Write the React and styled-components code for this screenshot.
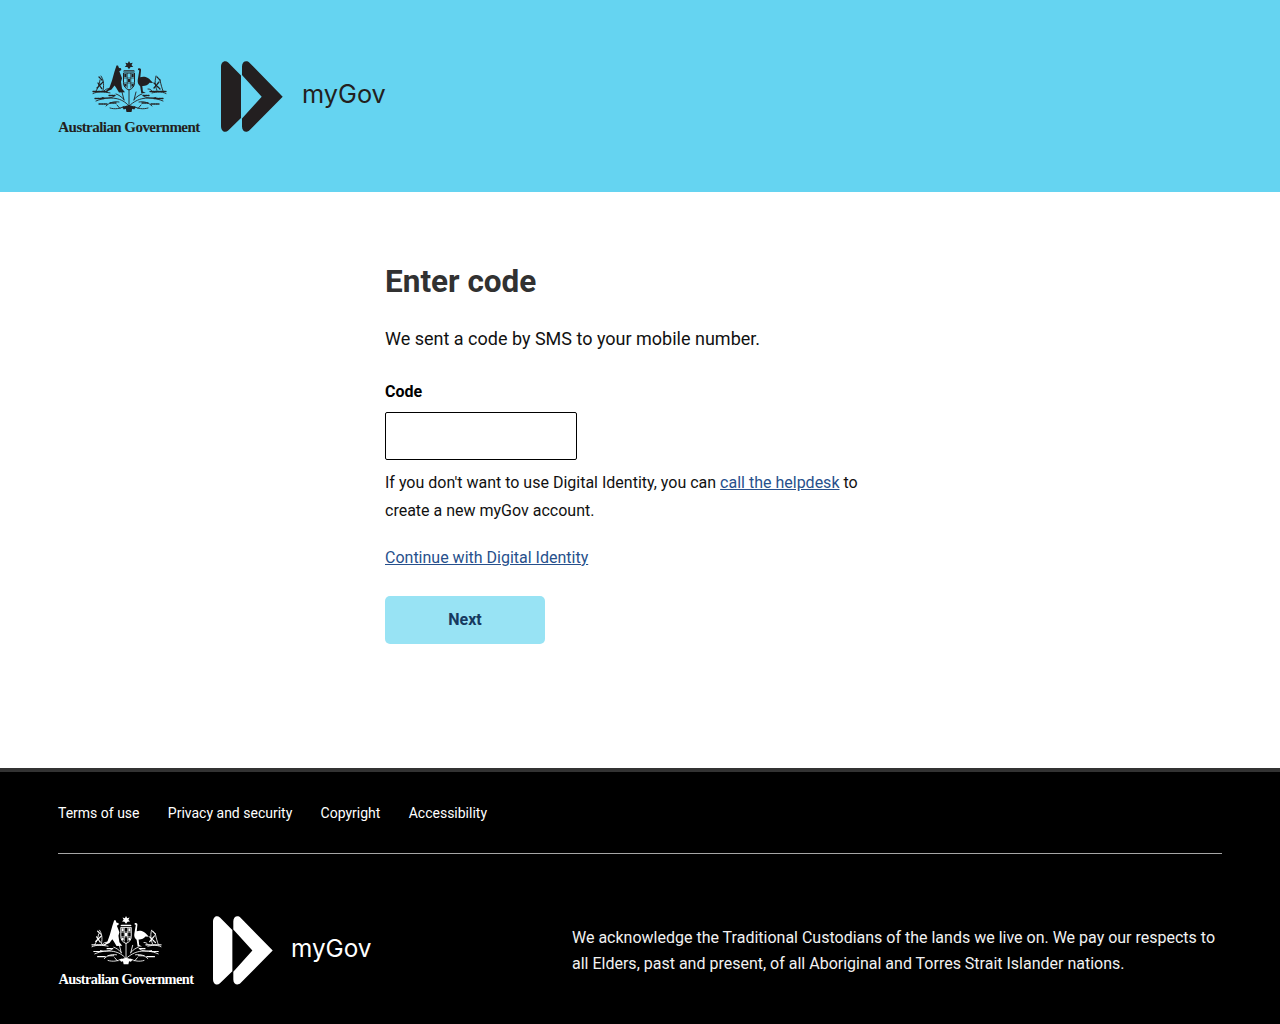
import React from 'react';
import styled, { createGlobalStyle } from 'styled-components';

const GlobalStyle = createGlobalStyle`
  html, body {
    margin: 0;
    padding: 0;
    background: #fff;
    font-family: Roboto, "Liberation Sans", sans-serif;
  }
`;

const Page = styled.div`
  display: flex;
  flex-direction: column;
  min-height: 1024px;
`;

const Header = styled.header`
  height: 192px;
  box-sizing: border-box;
  padding: 61px 58px 0;
  background: #65d4f1;
  color: #231f20;
`;

const Lockup = styled.div`
  display: flex;
  align-items: flex-start;
`;

const GovBlock = styled.div`
  display: flex;
  flex-direction: column;
  align-items: center;
  width: ${(p) => p.$width}px;
`;

const GovName = styled.span`
  margin-top: 7px;
  font-family: "Liberation Serif", serif;
  font-weight: 700;
  font-size: ${(p) => p.$size}px;
  line-height: 14px;
  white-space: nowrap;
  letter-spacing: -0.55px;
`;

const MarkSvg = styled.svg`
  display: block;
  flex: none;
  margin-left: ${(p) => p.$gap}px;
`;

const Wordmark = styled.span`
  font-family: Inter, sans-serif;
  font-size: ${(p) => p.$size}px;
  line-height: 30px;
  margin-left: ${(p) => p.$gap}px;
  margin-top: ${(p) => p.$top}px;
`;

const Main = styled.main`
  flex: 1;
  box-sizing: border-box;
  height: 576px;
  padding: 70px 0 0 385px;
`;

const Content = styled.div`
  width: 490px;
`;

const Title = styled.h1`
  margin: 0;
  font-size: 31.5px;
  line-height: 40px;
  font-weight: 700;
  color: #313131;
`;

const Lead = styled.p`
  margin: 23px 0 0;
  font-size: 18px;
  line-height: 28px;
  color: #111;
`;

const Label = styled.label`
  display: block;
  margin-top: 27px;
  font-size: 16px;
  line-height: 24px;
  font-weight: 700;
  color: #000;
`;

const CodeInput = styled.input`
  display: block;
  width: 192px;
  height: 48px;
  box-sizing: border-box;
  margin-top: 8px;
  border: 1px solid #000;
  border-radius: 2px;
  background: #fff;
  outline: none;
`;

const Help = styled.p`
  margin: 9px 0 0;
  font-size: 16px;
  line-height: 28px;
  color: #111;
`;

const TextLink = styled.a`
  color: #27508c;
  text-decoration: underline;
`;

const ContinueRow = styled.p`
  margin: 19px 0 0;
  font-size: 16px;
  line-height: 28px;
`;

const NextButton = styled.button`
  display: block;
  width: 160px;
  height: 48px;
  margin-top: 24px;
  padding: 0 0 2px;
  border: 0;
  border-radius: 5px;
  background: #98e3f4;
  color: #163a5f;
  font-family: Roboto, sans-serif;
  font-size: 16px;
  font-weight: 700;
`;

const Footer = styled.footer`
  box-sizing: border-box;
  height: 256px;
  padding: 0 58px;
  background: #000;
  border-top: 4px solid #333;
  color: #fff;
`;

const FooterNav = styled.nav`
  display: flex;
  gap: 28.3px;
  height: 82px;
  box-sizing: border-box;
  padding-top: 31px;
  border-bottom: 1px solid #a6a6a6;
`;

const FooterLink = styled.a`
  font-size: 14px;
  line-height: 20px;
  color: #fff;
  text-decoration: none;
`;

const FooterBottom = styled.div`
  display: flex;
  justify-content: space-between;
  align-items: flex-start;
  padding-top: 62px;
`;

const Acknowledgement = styled.p`
  width: 650px;
  margin: 9px 0 0;
  font-size: 16px;
  line-height: 26px;
  color: #f2f2f2;
`;

const CrestSvg = styled.svg`
  display: block;
  flex: none;
`;

// Coat of arms, drawn small so only the silhouette matters
const Crest = ({ width }) => (
  <CrestSvg width={width} height={width * (52 / 75)} viewBox="0 0 75 52" fill="currentColor" stroke="currentColor">
    {/* star and crest wreath */}
    <path stroke="none" d="M37 0l1.200 2.300 2.500-.6-1.200 2.200 1.700 2-2.600.1L37 8.200l-1.600-2.200-2.600-.1 1.700-2-1.200-2.200 2.500.6z" />
    <path stroke="none" d="M32 9.200h10l1 1.400h-12z" />
    {/* kangaroo */}
    <path stroke="none" d="M26 4.500l1 2.500 2 .3.300 1.700-2 1.300 1.200 3 1.500 4-1 3.500 1 7 3 3.500-6 .3-3-5-1.500-2-3 4-7 3 5-5 2.500-7 2.500-9 2-6z" />
    {/* emu */}
    <path stroke="none" d="M46.200 7.600c1.700-.8 3.100.3 2.800 1.900l-.7 6.700c2.200-.9 5.300-.7 7.600.8 2 1.300 3.800 3.400 5.200 5l-3.600-.3c-1.500 2.300-4.500 3.400-7.200 3.200l.6 5.700 3 1.500-4.600.2-1.100-7.100c-1.700-1.500-2.800-3.500-2.500-6l1.600-9.800-1.400-.7z" />
    {/* shield */}
    <path fill="none" strokeWidth="1" d="M31.500 12h11v9.500c0 3.900-2 6.100-5.500 7.500-3.500-1.400-5.500-3.600-5.500-7.500z" />
    <path fill="none" strokeWidth="0.7" d="M31.500 17h11M31.500 22h11M35.200 12v15M38.800 12v15" />
    <path stroke="none" d="M32.300 13h2.200v3h-2.200zM39.500 13h2.200v3h-2.200zM35.800 18h2.400v3h-2.400zM32.300 23h2.200v2.600h-2.200zM39.500 23h2.200v2.600h-2.200z" />
    {/* wattle, upper */}
    <g fill="none" strokeWidth="0.9" strokeLinecap="round">
      <path d="M1 32.500c5-2.400 11-1.600 17-.6M4 30c2-3 3.500-6 4-11M9 15c2 3 3.500 7 2 14.500M12 30c2-2 3-2.500 6-2.200" />
      <path d="M74 32.500c-5-2.400-9-1.600-14-.6M71 30c-1-3-2-6-3-11M64 15c-1 4-1.500 8 1 14.500M60 30c-1-1.500-2-2-4-2" />
      <path strokeDasharray="1.600 1" strokeWidth="1.300" d="M1 30.500h14M58 30.500h16M6 22l4 6M5 27l6-6M62 22l6 6M62 27l5-6M7 16l3 3M65 16l3 3" />
      {/* wattle, lower */}
      <path d="M4 40c7-3 13-3.500 20-2.500 5 1 9 3 13 7.500M71 40c-7-3-13-3.500-20-2.500-5 1-9 3-14 7.500" />
      <path d="M10 36.500c4 1 8 1 12-1M14 45c3-3 7-5 13-4M64 36.500c-4 1-8 1-12-1M60 45c-3-3-7-5-13-4" />
      <path d="M24 33c3 1 5 2.500 8 5.500M50 33c-3 1-5 2.500-8 5.500M30 31l2 8M44 31l-2 8M37 29v17" />
      <path d="M18 47c5 1.500 10 .7 14-1.500M56 47c-5 1.500-10 .7-14-1.500M25 44l3 3.500M49 44l-3 3.500" />
      <path strokeDasharray="1.500 1" strokeWidth="1.300" d="M3 37.500h9M62 37.500h9M7 43h8M59 43h8M17 34.500h6M51 34.500h6M18 42h6M50 42h6" />
    </g>
    {/* ribbon */}
    <path stroke="none" d="M30 46l7-2 7 2-1.800 2.400-2-.7-.7 3.300h-5l-.7-3.300-2 .7z" />
  </CrestSvg>
);

const Mark = ({ width, gap }) => (
  <MarkSvg $gap={gap} width={width} height={width * (71 / 62)} viewBox="0 0 62 71" fill="currentColor" aria-hidden="true">
    <path d="M0 6C0 .6 4.200-1.400 7.200 1.600L20 14.500V57L7.200 69.400C4.200 72.400 0 70.400 0 65z" />
    <path d="M21 5.500C21 .4 25.500-1.300 28.500 1.700L61.700 35.700 28.500 69.300C25.500 72.300 21 70.600 21 65.500V57.500L40.700 35.700 21 14z" />
  </MarkSvg>
);

const GovLogo = ({ gov, crest, size, mark, markGap, word, wordGap, wordTop }) => (
  <Lockup>
    <GovBlock $width={gov}>
      <Crest width={crest} />
      <GovName $size={size}>Australian Government</GovName>
    </GovBlock>
    <Mark width={mark} gap={markGap} />
    <Wordmark $size={word} $gap={wordGap} $top={wordTop}>myGov</Wordmark>
  </Lockup>
);

const App = () => (
  <Page>
    <GlobalStyle />
    <Header>
      <GovLogo gov={142} crest={75} size={15} mark={62} markGap={21} word={25.3} wordGap={19} wordTop={18} />
    </Header>
    <Main>
      <Content>
        <Title>Enter code</Title>
        <Lead>We sent a code by SMS to your mobile number.</Lead>
        <Label htmlFor="code">Code</Label>
        <CodeInput id="code" type="text" />
        <Help>
          If you don't want to use Digital Identity, you can <TextLink href="#">call the helpdesk</TextLink> to create a new myGov account.
        </Help>
        <ContinueRow>
          <TextLink href="#">Continue with Digital Identity</TextLink>
        </ContinueRow>
        <NextButton type="button">Next</NextButton>
      </Content>
    </Main>
    <Footer>
      <FooterNav>
        <FooterLink href="#">Terms of use</FooterLink>
        <FooterLink href="#">Privacy and security</FooterLink>
        <FooterLink href="#">Copyright</FooterLink>
        <FooterLink href="#">Accessibility</FooterLink>
      </FooterNav>
      <FooterBottom>
        <GovLogo gov={136} crest={71} size={14.4} mark={60} markGap={19} word={24.3} wordGap={18} wordTop={17} />
        <Acknowledgement>
          We acknowledge the Traditional Custodians of the lands we live on. We pay our respects to all Elders, past and present, of all Aboriginal and Torres Strait Islander nations.
        </Acknowledgement>
      </FooterBottom>
    </Footer>
  </Page>
);

export default App;
